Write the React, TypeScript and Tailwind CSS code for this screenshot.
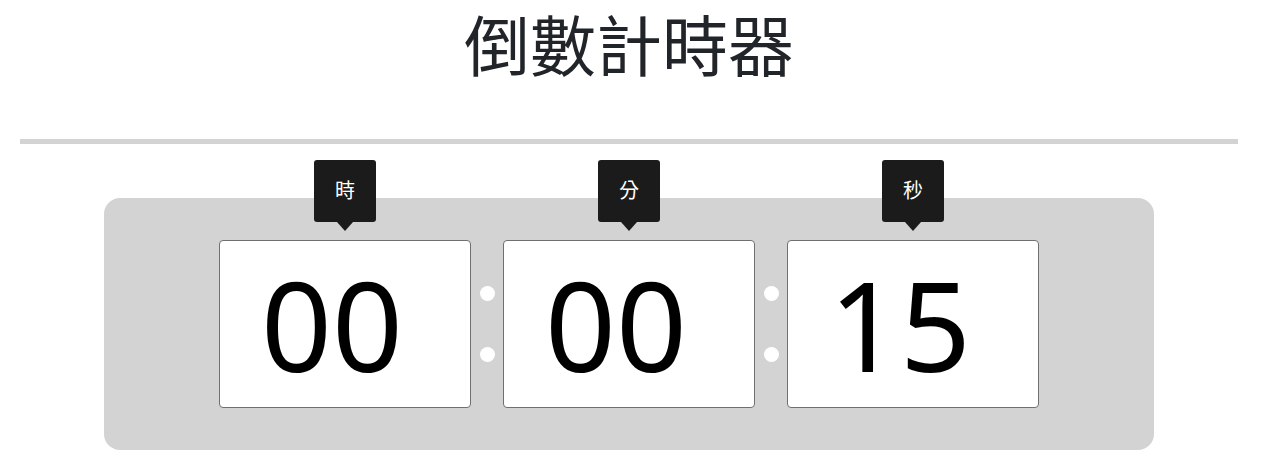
import React from 'react';

const units = [
  { label: '時', value: '00' },
  { label: '分', value: '00' },
  { label: '秒', value: '15' },
];

const Colon = () => (
  <div className="w-[32px] h-[168px] flex flex-col items-center pt-[46px] gap-[46px]">
    <span className="w-[15px] h-[15px] rounded-full bg-white" />
    <span className="w-[15px] h-[15px] rounded-full bg-white" />
  </div>
);

const Unit = ({ label, value }: { label: string; value: string }) => (
  <div className="relative w-[252px] h-[168px]">
    <div className="absolute left-1/2 -translate-x-1/2 top-[-80px] flex flex-col items-center">
      <div className="w-[62px] h-[62px] rounded-[3px] bg-[#1b1b1b] text-white flex items-center justify-center text-[20px]">
        {label}
      </div>
      <div className="w-0 h-0 border-l-[8px] border-r-[8px] border-t-[9px] border-l-transparent border-r-transparent border-t-[#1b1b1b]" />
    </div>
    <div className="w-full h-full bg-white border border-[#707070] rounded-[4px] flex items-center justify-center pr-[26px]">
      <span className="text-[124px] leading-none text-black">{value}</span>
    </div>
  </div>
);

export default function App() {
  return (
    <div
      className="w-[1271px] h-[463px] bg-white overflow-hidden pl-[20px] pr-[33px]"
      style={{ fontFamily: '"Noto Sans", "Noto Sans CJK TC", sans-serif' }}
    >
      <h1 className="text-center text-[66px] leading-none text-[#212529] font-normal pt-[12px] h-[139px]">
        倒數計時器
      </h1>
      <hr className="h-[5px] bg-[#d3d3d3] border-0" />
      <div className="mx-[84px] mt-[54px] h-[252px] bg-[#d3d3d3] rounded-[16px] pt-[42px] flex justify-center items-start">
        {units.map((u, i) => (
          <React.Fragment key={u.label}>
            {i > 0 && <Colon />}
            <Unit label={u.label} value={u.value} />
          </React.Fragment>
        ))}
      </div>
    </div>
  );
}
